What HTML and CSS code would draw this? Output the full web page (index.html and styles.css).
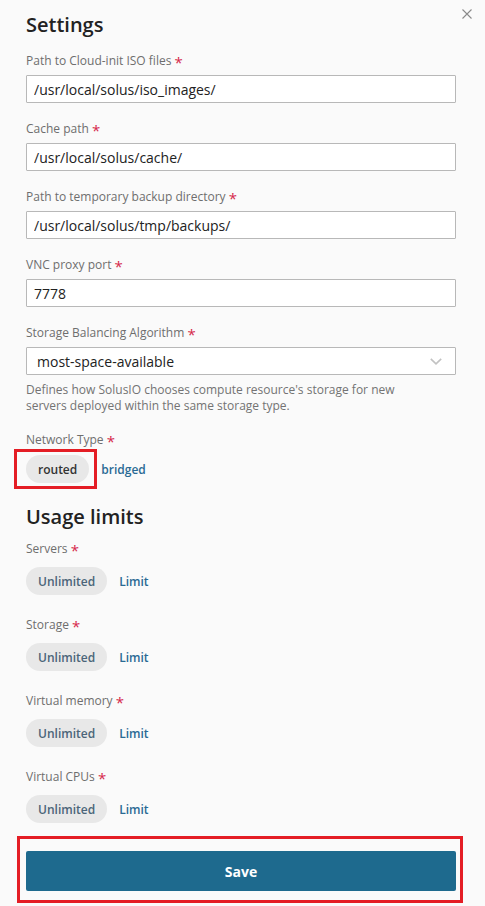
FILE: index.html
```html
<!DOCTYPE html>
<html lang="en">
<head>
    <meta charset="UTF-8" />
    <meta name="viewport" content="width=device-width, initial-scale=1.0" />
    <title>Settings</title>
    <link rel="stylesheet" href="styles.css">
</head>
<body>
    <div class="panel">
        <button class="close" type="button" aria-label="Close">
            <svg width="10" height="10" viewBox="0 0 10 10">
                <path d="M0.5 0.5 L9.5 9.5 M9.5 0.5 L0.5 9.5" stroke="#8a8a8a" stroke-width="1.1" fill="none" />
            </svg>
        </button>

        <h2 class="title">Settings</h2>

        <div class="field">
            <label class="label">Path to Cloud-init ISO files <span class="req">*</span></label>
            <input class="input" type="text" value="/usr/local/solus/iso_images/">
        </div>

        <div class="field">
            <label class="label">Cache path <span class="req">*</span></label>
            <input class="input" type="text" value="/usr/local/solus/cache/">
        </div>

        <div class="field">
            <label class="label">Path to temporary backup directory <span class="req">*</span></label>
            <input class="input" type="text" value="/usr/local/solus/tmp/backups/">
        </div>

        <div class="field">
            <label class="label">VNC proxy port <span class="req">*</span></label>
            <input class="input" type="text" value="7778">
        </div>

        <div class="field">
            <label class="label">Storage Balancing Algorithm <span class="req">*</span></label>
            <div class="select">
                <span>most-space-available</span>
                <svg width="12" height="7" viewBox="0 0 12 7">
                    <path d="M0.8 0.8 L6 5.8 L11.2 0.8" stroke="#c2c2c2" stroke-width="1.6" fill="none" />
                </svg>
            </div>
            <div class="help">Defines how SolusIO chooses compute resource's storage for new servers deployed within the same storage type.</div>
        </div>

        <div class="field">
            <label class="label">Network Type <span class="req">*</span></label>
            <div class="pills">
                <span class="mark">
                    <button class="pill active" type="button">routed</button>
                </span>
                <button class="pill" type="button">bridged</button>
            </div>
        </div>

        <h2 class="title section">Usage limits</h2>

        <div class="limit">
            <label class="label">Servers <span class="req">*</span></label>
            <div class="pills">
                <button class="pill active blue" type="button">Unlimited</button>
                <button class="pill" type="button">Limit</button>
            </div>
        </div>

        <div class="limit">
            <label class="label">Storage <span class="req">*</span></label>
            <div class="pills">
                <button class="pill active blue" type="button">Unlimited</button>
                <button class="pill" type="button">Limit</button>
            </div>
        </div>

        <div class="limit">
            <label class="label">Virtual memory <span class="req">*</span></label>
            <div class="pills">
                <button class="pill active blue" type="button">Unlimited</button>
                <button class="pill" type="button">Limit</button>
            </div>
        </div>

        <div class="limit">
            <label class="label">Virtual CPUs <span class="req">*</span></label>
            <div class="pills">
                <button class="pill active blue" type="button">Unlimited</button>
                <button class="pill" type="button">Limit</button>
            </div>
        </div>

        <div class="mark save-mark">
            <button class="save" type="button">Save</button>
        </div>
    </div>
</body>
</html>
```

FILE: styles.css
```css
body {
    font-family: 'Open Sans', 'Noto Sans', sans-serif;
    background-color: #fafafa;
    color: #222;
    margin: 0;
}

.panel {
    position: relative;
    padding: 13px 29px 20px 26px;
}

.close {
    position: absolute;
    top: 9px;
    right: 13px;
    width: 10px;
    height: 10px;
    padding: 0;
    border: none;
    background: none;
    display: flex;
}

.title {
    margin: 0 0 16px;
    font-size: 20px;
    line-height: 24px;
    font-weight: 600;
    color: #222;
}

    .title.section {
        margin: 22px 0 12px;
    }

.field {
    margin-bottom: 18px;
}

.label {
    display: block;
    height: 16px;
    font-size: 12px;
    line-height: 16px;
    color: #6e6e6e;
    margin-bottom: 6px;
}

.req {
    color: #d6284b;
    font-size: 15px;
    line-height: 0;
    vertical-align: -3px;
}

.input {
    display: block;
    box-sizing: border-box;
    width: 100%;
    height: 28px;
    margin: 0;
    padding: 0 7px;
    border: 1px solid #b8b8b8;
    border-radius: 1px;
    background: #fff;
    font-family: inherit;
    font-size: 14px;
    color: #222;
}

.select {
    box-sizing: border-box;
    height: 28px;
    display: flex;
    align-items: center;
    justify-content: space-between;
    padding: 0 13px 0 10px;
    border: 1px solid #b8b8b8;
    border-radius: 1px;
    background: #fff;
    font-size: 14px;
    color: #222;
}

.help {
    margin-top: 7px;
    max-width: 400px;
    font-size: 12px;
    line-height: 16px;
    color: #737373;
}

.pills {
    display: flex;
    align-items: center;
    margin-top: 7px;
}

.pill {
    height: 28px;
    padding: 0 12px;
    border: none;
    border-radius: 14px;
    background: none;
    font-family: inherit;
    font-size: 12px;
    font-weight: 600;
    color: #2a6a94;
    cursor: pointer;
}

    .pill.active {
        background-color: #e8e8e8;
        color: #333;
    }

    .pill.blue {
        color: #4b6579;
    }

.limit {
    margin-bottom: 22px;
}

    .limit .label {
        margin-bottom: 10px;
    }

    .limit .pills {
        margin-top: 0;
    }

    .limit:last-of-type {
        margin-bottom: 28px;
    }

/* red annotation frames */
.mark {
    position: relative;
    display: flex;
}

    .mark::after {
        content: "";
        position: absolute;
        top: -6px;
        left: -12px;
        right: -8px;
        bottom: -6px;
        border: 3px solid #e41d25;
        pointer-events: none;
    }

.save-mark {
    margin-top: 28px;
}

    .save-mark::after {
        top: -15px;
        left: -9px;
        right: -7px;
        bottom: -12px;
    }

.save {
    width: 100%;
    height: 40px;
    border: none;
    border-radius: 2px;
    background-color: #1e6a8e;
    color: #fff;
    font-family: inherit;
    font-size: 14px;
    font-weight: 700;
    cursor: pointer;
}
```
